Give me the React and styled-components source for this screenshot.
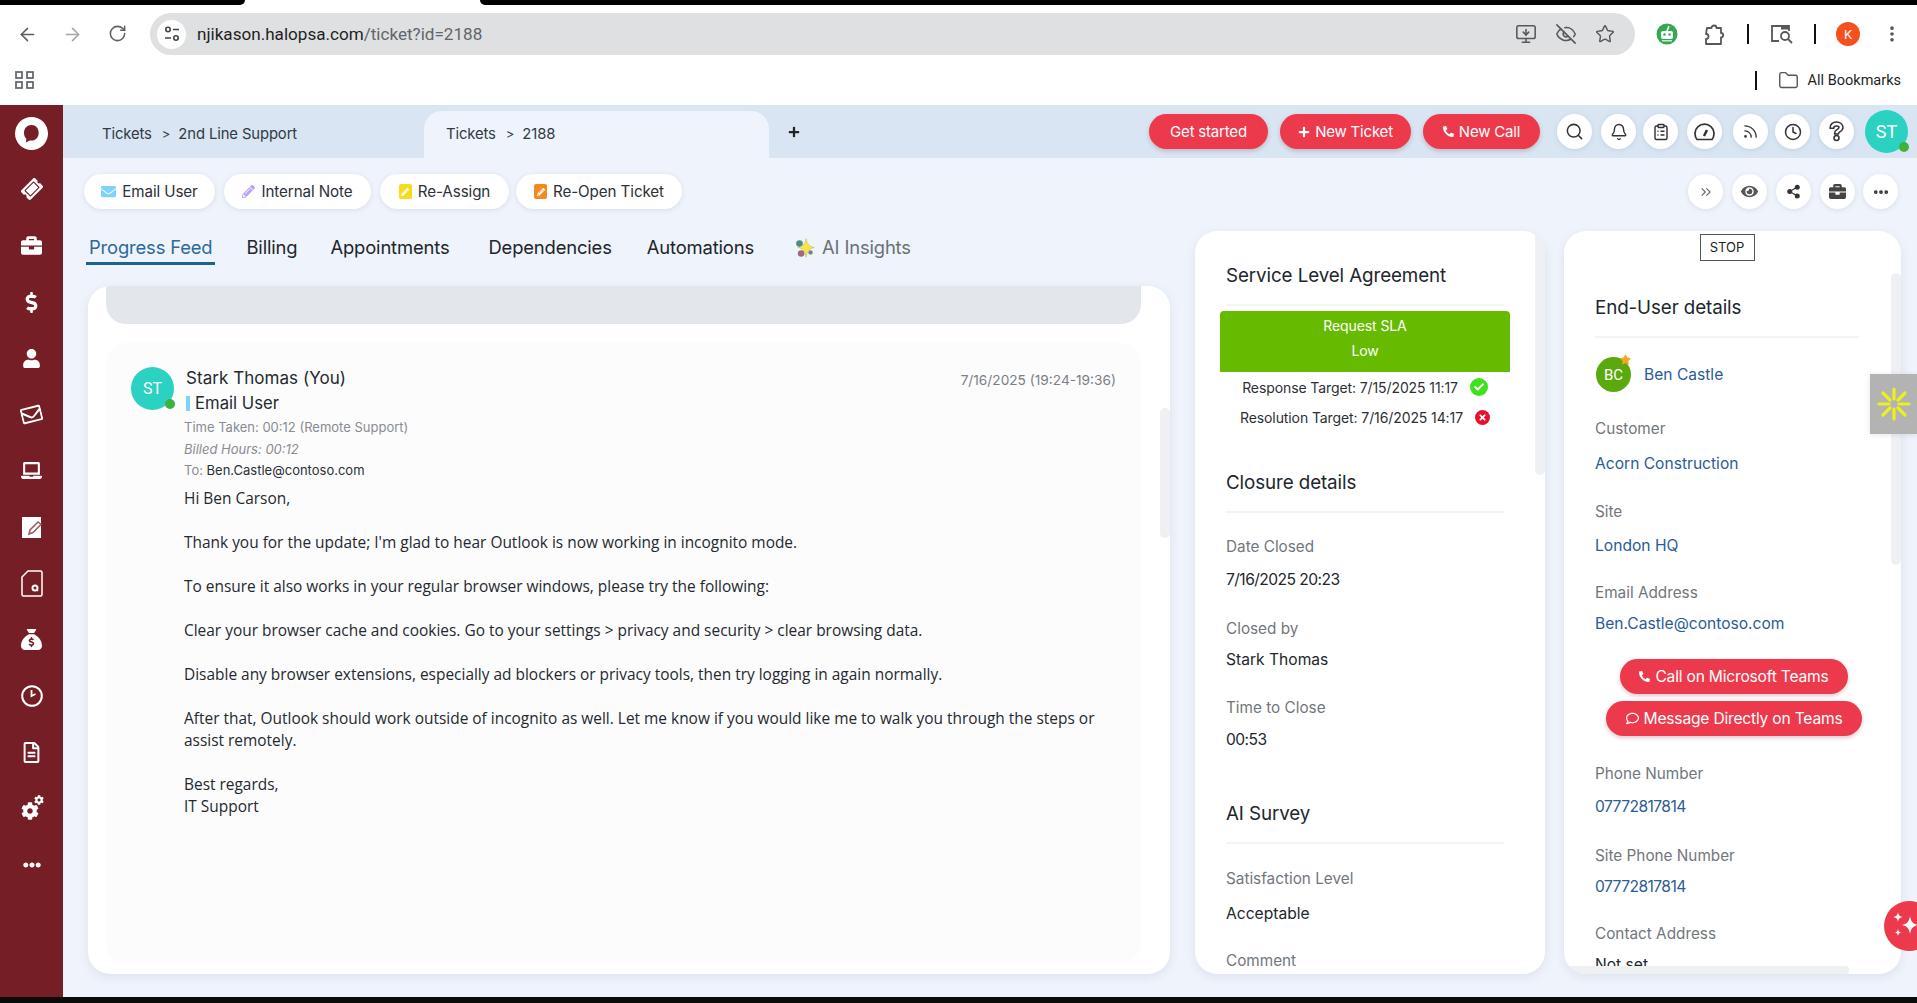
import React from "react";
import styled, { createGlobalStyle } from "styled-components";
import {
  ArrowLeft, ArrowRight, RotateCw, MonitorDown, EyeOff, Star, Folder, Search, Bell,
  ClipboardList, Rss, Clock, ChevronsRight, Share2, Ellipsis, EllipsisVertical,
} from "lucide-react";
import {
  FaTicketAlt, FaBriefcase, FaDollarSign, FaUser, FaRegEnvelope, FaLaptop, FaRegFileAlt,
  FaCog, FaEllipsisH, FaPlus, FaPhoneAlt, FaEnvelope, FaPencilAlt, FaEye, FaCheck, FaTimes, FaRegComment, FaStar,
} from "react-icons/fa";
import { FaSackDollar } from "react-icons/fa6";

const UI_FONT = '"Inter", "Liberation Sans", sans-serif';

const Global = createGlobalStyle`
  html, body { margin: 0; padding: 0; background: #000; overflow: hidden; }
  * { box-sizing: border-box; }
  body { font-family: ${UI_FONT}; }
`;

const Page = styled.div`
  position: relative;
  width: 1917px;
  height: 1003px;
  display: flex;
  flex-direction: column;
  overflow: hidden;
  background: #fff;
`;

const TopStrip = styled.div`
  height: 5px;
  display: flex;
  justify-content: space-between;
  background: #fff;
`;

const StripPiece = styled.div`
  width: ${({ $w }) => $w}px;
  background: #000;
  border-radius: ${({ $right }) => ($right ? "0 0 0 6px" : "0 0 6px 0")};
`;

const Toolbar = styled.div`
  height: 55px;
  padding: 8px 0 5px 0;
  display: flex;
  align-items: center;
  background: #fff;
`;

const NavIcon = styled.div`
  width: 45px;
  display: flex;
  justify-content: center;
  color: ${({ $dim }) => ($dim ? "#a5a7aa" : "#5b5e62")};
`;

const NavGroup = styled.div`
  width: 150px;
  padding-left: 5px;
  display: flex;
`;

const UrlBar = styled.div`
  width: 1485px;
  height: 42px;
  border-radius: 21px;
  background: #dfe0e2;
  display: flex;
  align-items: center;
  padding: 0 20px 0 7px;
`;

const SiteIcon = styled.div`
  width: 29px;
  height: 29px;
  border-radius: 50%;
  background: #fff;
  display: flex;
  align-items: center;
  justify-content: center;
  margin-right: 11px;
`;

const UrlText = styled.div`
  font: 400 17.1px "Roboto", sans-serif;
  color: #1f1f1f;
  span { color: #62656a; }
`;

const UrlActions = styled.div`
  margin-left: auto;
  display: flex;
  align-items: center;
  gap: 18px;
  color: #55585c;
`;

const ChromeRight = styled.div`
  flex: 1;
  display: flex;
  align-items: center;
  padding-left: 21px;
  color: #55585c;
`;

const Sep = styled.div`
  width: 2px;
  height: ${({ $h }) => $h || 20}px;
  background: #111;
  margin: ${({ $m }) => $m};
`;

const KAvatar = styled.div`
  width: 24px;
  height: 24px;
  border-radius: 50%;
  background: #f4511e;
  color: #fff;
  font: 400 13px "Roboto", sans-serif;
  display: flex;
  align-items: center;
  justify-content: center;
`;

const KebabSlot = styled.div`
  margin-left: 22px;
  display: flex;
`;

const BookmarkBar = styled.div`
  height: 45px;
  padding: 0 16px 5px 15px;
  display: flex;
  align-items: center;
  color: #555;
`;

const AllBookmarks = styled.div`
  font: 400 14.5px "Roboto", sans-serif;
  color: #1f1f1f;
  margin-left: 9px;
`;

const Workspace = styled.div`
  flex: 1;
  min-height: 0;
  display: flex;
`;

const BottomStrip = styled.div`
  height: 6px;
  background: #0b0b0b;
  flex-shrink: 0;
`;

const Sidebar = styled.nav`
  width: 63px;
  flex-shrink: 0;
  background: #751e25;
  display: flex;
  flex-direction: column;
  color: #fff;
`;

const SideItem = styled.div`
  position: relative;
  height: 56.3px;
  display: flex;
  align-items: center;
  justify-content: center;
  svg { transform: ${({ $rot }) => ($rot ? `rotate(${$rot}deg)` : "none")}; }
`;

const GearBox = styled.div`
  position: relative;
  width: 22px;
  height: 22px;
`;

const SmallGear = styled.span`
  position: absolute;
  top: -3px;
  right: -1px;
  display: flex;
`;

const BigGear = styled.span`
  position: absolute;
  left: 0;
  bottom: 0;
  display: flex;
`;

const Main = styled.main`
  flex: 1;
  min-width: 0;
  display: flex;
  flex-direction: column;
  background: #eff3fb;
`;

const Header = styled.header`
  height: 53px;
  flex-shrink: 0;
  background: #d9e5f2;
  display: flex;
  align-items: flex-end;
`;

const Crumb = styled.div`
  width: ${({ $w }) => $w}px;
  height: ${({ $active }) => ($active ? 47 : 53)}px;
  padding-left: ${({ $active }) => ($active ? 22 : 39)}px;
  padding-top: ${({ $active }) => ($active ? 0 : 4)}px;
  padding-bottom: ${({ $active }) => ($active ? 2 : 0)}px;
  background: ${({ $active }) => ($active ? "#eff3fb" : "transparent")};
  border-radius: ${({ $active }) => ($active ? "18px 18px 0 0" : "0")};
  display: flex;
  align-items: center;
  font-size: 14.8px;
  letter-spacing: -0.1px;
  color: #2f3a45;
`;

const CrumbArrow = styled.span`
  margin: ${({ $active }) => ($active ? "0 8px 0 10px" : "0 8px 0 10px")};
  font-size: 13px;
`;

const AddTab = styled.div`
  height: 53px;
  margin-left: 19px;
  display: flex;
  align-items: center;
  color: #222;
`;

const HeaderRight = styled.div`
  height: 53px;
  margin-left: auto;
  padding-right: 9px;
  display: flex;
  align-items: center;
`;

const RedButton = styled.div`
  width: ${({ $w }) => $w}px;
  height: 35px;
  margin: ${({ $m }) => $m || "0"};
  border-radius: 18px;
  background: #ec3a4c;
  box-shadow: 0 2px 4px rgba(120, 40, 50, 0.25);
  color: #fff;
  font-size: ${({ $f }) => $f || 15}px;
  letter-spacing: -0.2px;
  display: flex;
  align-items: center;
  justify-content: center;
  gap: 5px;
  flex-shrink: 0;
`;

const Round = styled.div`
  width: 35px;
  height: 35px;
  margin-left: ${({ $ml }) => $ml || 0}px;
  border-radius: 50%;
  background: #fff;
  box-shadow: 0 1px 5px rgba(90, 110, 140, 0.16);
  color: ${({ $c }) => $c || "#333"};
  display: flex;
  align-items: center;
  justify-content: center;
  flex-shrink: 0;
`;

const Avatar = styled.div`
  position: relative;
  width: ${({ $s }) => $s}px;
  height: ${({ $s }) => $s}px;
  margin-left: ${({ $ml }) => $ml || 0}px;
  border-radius: 50%;
  background: ${({ $bg }) => $bg || "#2bd1c1"};
  color: #fff;
  font: 400 ${({ $f }) => $f || 16}px "Roboto", sans-serif;
  display: flex;
  align-items: center;
  justify-content: center;
  flex-shrink: 0;
`;

const OnlineDot = styled.span`
  position: absolute;
  right: -1px;
  bottom: 1px;
  width: 10px;
  height: 10px;
  border-radius: 50%;
  background: #3fb23c;
`;

const FavStar = styled.span`
  position: absolute;
  top: -3px;
  right: 0;
  color: #f5a623;
  display: flex;
`;

const ActionRow = styled.div`
  height: 73px;
  flex-shrink: 0;
  padding: 16px 19px 0 21px;
  display: flex;
  align-items: flex-start;
`;

const Pill = styled.div`
  width: ${({ $w }) => $w}px;
  height: 35px;
  margin-right: ${({ $mr }) => $mr || 9}px;
  border-radius: 18px;
  background: #fff;
  box-shadow: 0 1px 5px rgba(90, 110, 140, 0.16);
  display: flex;
  align-items: center;
  justify-content: center;
  gap: 6px;
  font-size: 15.2px;
  letter-spacing: -0.1px;
  color: #2c3138;
`;

const Badge = styled.span`
  width: 13px;
  height: 15px;
  border-radius: 2px;
  background: ${({ $bg }) => $bg};
  color: #fff;
  display: flex;
  align-items: center;
  justify-content: center;
`;

const RowRight = styled.div`
  margin-left: auto;
  display: flex;
`;

const Content = styled.div`
  flex: 1;
  min-height: 0;
  padding: 0 0 23px 25px;
  display: grid;
  grid-template-columns: 1107px 369px 337px;
`;

const LeftColumn = styled.div`
  padding-right: 25px;
  display: flex;
  flex-direction: column;
  min-height: 0;
`;

const Tabs = styled.div`
  height: 34px;
  margin: 0 0 21px -2px;
  display: flex;
  flex-shrink: 0;
`;

const Tab = styled.div`
  height: 34px;
  margin-right: ${({ $mr }) => $mr}px;
  padding: 6px 3px 0;
  border-bottom: 3px solid ${({ $active }) => ($active ? "#1b6296" : "transparent")};
  font-size: 18.4px;
  line-height: 20px;
  letter-spacing: -0.15px;
  white-space: nowrap;
  color: ${({ $active, $muted }) => ($active ? "#2a6a9c" : $muted ? "#6b7075" : "#20262c")};
  display: flex;
  gap: 6px;
  align-items: flex-start;
`;

const Card = styled.section`
  position: relative;
  flex: 1;
  min-height: 0;
  background: #fff;
  border-radius: 22px;
  box-shadow: 0 3px 10px rgba(90, 110, 140, 0.12);
  overflow: hidden;
`;

const FeedCard = styled(Card)`
  padding: 0 29px 0 18px;
  display: flex;
  flex-direction: column;
`;

const Banner = styled.div`
  height: 38px;
  flex-shrink: 0;
  background: #e3e7ec;
  border-radius: 0 0 20px 20px;
`;

const FeedItem = styled.article`
  height: 620px;
  margin-top: 19px;
  padding: 24px 25px 0 25px;
  background: #fcfcfd;
  border-radius: 20px;
  display: grid;
  grid-template-columns: 43px 1fr;
  column-gap: 10px;
`;

const FeedHead = styled.div`
  position: relative;
  min-width: 0;
`;

const FeedName = styled.div`
  height: 22px;
  padding-left: 2px;
  font-size: 17px;
  line-height: 22px;
  color: #24292f;
  letter-spacing: 0.05px;
`;

const FeedDate = styled.div`
  position: absolute;
  top: 3px;
  right: 0;
  font-size: 13.7px;
  line-height: 20px;
  color: #7b7f85;
`;

const FeedType = styled.div`
  height: 24px;
  margin-top: 2px;
  padding-left: 2px;
  font-size: 16.7px;
  line-height: 24px;
  color: #24292f;
  display: flex;
  align-items: center;
  gap: 5px;
`;

const TypeMark = styled.span`
  width: 4px;
  height: 15px;
  background: #7fd3fb;
`;

const FeedMeta = styled.div`
  height: ${({ $h }) => $h || 22}px;
  margin-top: ${({ $mt }) => $mt || 0}px;
  font-size: 13px;
  line-height: ${({ $h }) => $h || 22}px;
  font-style: ${({ $italic }) => ($italic ? "italic" : "normal")};
  color: #888c91;
  b { font-weight: 400; color: #2b3036; }
`;

const FeedBody = styled.div`
  margin-top: 7px;
  font: 400 15.45px/22px "Open Sans", sans-serif;
  color: #24292f;
  p { margin: 0 0 22px; }
`;

const PanelScroll = styled.div`
  position: absolute;
  top: ${({ $top }) => $top}px;
  right: 0;
  width: 10px;
  height: ${({ $h }) => $h}px;
  border-radius: 6px;
  background: #eef0f4;
`;

const SidePanel = styled(Card)`
  width: ${({ $w }) => $w}px;
  padding: ${({ $pad }) => $pad};
  flex: none;
  height: 743px;
`;

const SectionTitle = styled.h3`
  margin: ${({ $mt }) => $mt || 0}px 0 0;
  height: 44px;
  padding: 1px 0 15px;
  border-bottom: 2px solid #f3f4f7;
  font-size: 18.8px;
  font-weight: 400;
  line-height: 26px;
  letter-spacing: -0.1px;
  color: #20262c;
`;

const SlaBox = styled.div`
  height: 61px;
  margin: 5px -6px 0;
  padding-top: 2px;
  background: #66bb00;
  border-radius: 4px 4px 0 0;
  color: #fff;
  font-size: 14px;
  line-height: 25px;
  text-align: center;
  letter-spacing: -0.1px;
`;

const Target = styled.div`
  height: 30px;
  display: flex;
  align-items: center;
  justify-content: center;
  gap: 12px;
  font-size: 14px;
  letter-spacing: -0.1px;
  white-space: nowrap;
  color: #2b3036;
`;

const StatusDot = styled.span`
  width: ${({ $s }) => $s}px;
  height: ${({ $s }) => $s}px;
  border-radius: 50%;
  background: ${({ $bg }) => $bg};
  color: #fff;
  display: flex;
  align-items: center;
  justify-content: center;
  flex-shrink: 0;
`;

const Label = styled.div`
  margin-top: ${({ $mt }) => $mt}px;
  font-size: 15.3px;
  line-height: 20px;
  color: #72767c;
`;

const Value = styled.div`
  margin-top: ${({ $mt }) => $mt}px;
  font-size: 15.6px;
  line-height: 20px;
  letter-spacing: ${({ $tight }) => ($tight ? "-0.55px" : "0")};
  color: ${({ $link }) => ($link ? "#2a5c96" : "#22272d")};
`;

const StopBox = styled.div`
  width: 55px;
  height: 27px;
  margin: 3px auto 0;
  border: 1px solid #555;
  font-size: 13px;
  line-height: 25px;
  text-align: center;
  color: #222;
`;

const EndUserRow = styled.div`
  height: 35px;
  margin-top: 19px;
  display: flex;
  align-items: center;
  gap: 13px;
  padding-left: 1px;
`;

const ButtonStack = styled.div`
  width: 264px;
  margin: 25px 0 0 7px;
  display: flex;
  flex-direction: column;
  align-items: center;
  gap: 7px;
`;

const HScroll = styled.div`
  position: absolute;
  left: 3px;
  bottom: 0;
  width: 282px;
  height: 8px;
  border-radius: 4px;
  background: #eef0f2;
`;

const SideTool = styled.div`
  position: absolute;
  top: 374px;
  right: 0;
  width: 47px;
  height: 60px;
  background: #b3b3b3;
  display: flex;
  align-items: center;
  justify-content: center;
  box-shadow: 0 1px 6px rgba(0, 0, 0, 0.1);
`;

const FloatButton = styled.div`
  position: absolute;
  top: 901px;
  left: 1884px;
  width: 50px;
  height: 50px;
  border-radius: 50%;
  background: #ec3a4c;
  display: flex;
  align-items: center;
  padding-left: 8px;
`;

const SiteTune = () => (
  <svg width="16" height="16" viewBox="0 0 16 16" fill="none" stroke="#444" strokeWidth="1.6">
    <circle cx="4" cy="3.5" r="2.2" />
    <path d="M9 3.5h6M1 12h6" />
    <circle cx="12" cy="12" r="2.2" />
  </svg>
);

const Bot = () => (
  <svg width="22" height="22" viewBox="0 0 22 22">
    <circle cx="11" cy="11" r="10.5" fill="#34a853" />
    <rect x="5" y="8" width="12" height="8" rx="2" fill="#fff" />
    <path d="M11 8l2-5" stroke="#fff" strokeWidth="1.5" />
    <circle cx="8.5" cy="11.5" r="1.2" fill="#34a853" />
    <circle cx="13.5" cy="11.5" r="1.2" fill="#34a853" />
    <rect x="6" y="17" width="10" height="1.5" fill="#cfe8d6" />
  </svg>
);

const ExtensionIcon = () => (
  <svg width="22" height="23" viewBox="0 0 22 23" fill="none" stroke="#55585c" strokeWidth="1.8" strokeLinejoin="round" style={{ marginLeft: 25 }}>
    <path d="M4 5h4.500a2.500 2.500 0 0 1 5 0H18v5a2.200 2.200 0 0 1 0 4.400V21H3v-5a2.500 2.500 0 0 0 0-5z" />
  </svg>
);

const TabSearch = () => (
  <svg width="24" height="22" viewBox="0 0 24 22" fill="none" stroke="#55585c" strokeWidth="1.8">
    <path d="M9 18H2V3h17v5" />
    <rect x="11" y="2.5" width="8" height="4" fill="#55585c" stroke="none" />
    <circle cx="15" cy="13" r="4" />
    <path d="M18 16l4 4" />
  </svg>
);

const AppsGrid = () => (
  <svg width="19" height="18" viewBox="0 0 19 18" fill="none" stroke="#5f6368" strokeWidth="1.7">
    <rect x="1" y="1" width="6" height="6" />
    <rect x="12" y="1" width="6" height="6" />
    <rect x="1" y="11" width="6" height="6" />
    <rect x="12" y="11" width="6" height="6" />
  </svg>
);

const HaloLogo = () => (
  <svg width="33" height="33" viewBox="0 0 33 33">
    <circle cx="16.5" cy="16.5" r="16.5" fill="#fff" />
    <path d="M16.500 8c4.300 0 7.200 3.300 7.200 7.800s-2.900 7.800-7.200 7.800c-.6 0-1.200-.1-1.800-.2L11 25.500l.3-3.700C9.700 20.300 9 18.200 9 15.800 9 11.300 12.200 8 16.500 8z" fill="#751e25" />
  </svg>
);

const EditSquare = () => (
  <svg width="20" height="21" viewBox="0 0 20 21">
    <rect width="19" height="21" fill="#fff" />
    <path d="M7 17l1-4 8-8 3 2.500-8 8z" fill="#fff" stroke="#9c5a60" strokeWidth="1.500" />
  </svg>
);

const DocSearch = () => (
  <svg width="22" height="27" viewBox="0 0 22 27" fill="none" stroke="#fff" strokeWidth="1.500">
    <path d="M7 1h12.500a1.500 1.500 0 0 1 1.500 1.500v22a1.500 1.500 0 0 1-1.500 1.500h-17A1.500 1.500 0 0 1 1 24.500V7z" />
    <circle cx="14" cy="18" r="2.500" strokeWidth="2" />
    <path d="M15.500 19.500l1.500 1.500" strokeWidth="1.500" />
  </svg>
);

const SideClock = () => (
  <svg width="22" height="22" viewBox="0 0 22 22" fill="none" stroke="#fff" strokeWidth="2">
    <circle cx="11" cy="11" r="9.800" />
    <path d="M10.500 5v6l4-2" strokeWidth="1.800" />
  </svg>
);

const HelpOutline = () => (
  <svg width="15" height="21" viewBox="0 0 15 21" fill="none" stroke="#333" strokeWidth="1.500" strokeLinejoin="round">
    <path d="M7.500 1C11 1 14 3.200 14 6.500c0 2.600-1.700 3.600-3.500 4.600-.8.500-1 .8-1 1.900H5.500c0-2.500.8-3.400 2.300-4.300 1.200-.7 2.200-1.200 2.200-2.200 0-1-1.200-1.500-2.500-1.500-1.500 0-2.700.8-2.700 2.200H1C1 3.200 3.800 1 7.500 1z" />
    <circle cx="7.500" cy="17" r="2.500" />
  </svg>
);

const GaugeOutline = () => (
  <svg width="21" height="19" viewBox="0 0 21 19" fill="none" stroke="#333" strokeWidth="1.700">
    <path d="M3 17.500A9.500 9.500 0 1 1 18 17.500z" strokeLinejoin="round" />
    <path d="M10 14l3-6" strokeWidth="2.500" />
  </svg>
);

const SlideSpark = () => (
  <svg width="36" height="36" viewBox="0 0 36 36" stroke="#eef01a" strokeWidth="3.200" strokeLinecap="round">
    <path d="M18 3v10M18 23v10M3 18h10M23 18h10M7 7l7 7M22 22l7 7M29 7l-7 7M14 22l-7 7" />
  </svg>
);

const AiStar = () => (
  <svg width="22" height="22" viewBox="0 0 20 20">
    <circle cx="5" cy="6" r="3" fill="#4f8a8b" />
    <circle cx="6.500" cy="15" r="3" fill="#9a6a80" />
    <circle cx="15" cy="14" r="2" fill="#7a7f85" />
    <path d="M11 1.500c.7 4.500 2.500 7 7.500 8-5 1-6.800 3.500-7.500 9-.7-5.500-2.500-8-7.500-9 5-1 6.800-3.500 7.500-8z" fill="#f7e64a" stroke="#c9b92e" strokeWidth=".5" />
  </svg>
);

const WhiteSparkles = () => (
  <svg width="26" height="34" viewBox="0 0 26 34" fill="#fff">
    <path d="M6 3c.5 3.300 1.500 4.500 5 5-3.500.5-4.500 1.700-5 5-.5-3.300-1.500-4.500-5-5 3.500-.5 4.500-1.700 5-5z" />
    <path d="M18 7c.8 5.500 3 8 8 9-5 1-7.200 3.500-8 9-.8-5.500-3-8-8-9 5-1 7.200-3.500 8-9z" />
    <path d="M6 20c.4 2.400 1.200 3.200 3.500 3.500C7.200 23.800 6.400 24.600 6 27c-.4-2.400-1.200-3.200-3.500-3.500C4.800 23.200 5.600 22.400 6 20z" />
  </svg>
);

const sideItems = [
  { key: "logo", icon: <HaloLogo /> },
  { key: "ticket", icon: <FaTicketAlt size={20} />, rot: -45 },
  { key: "work", icon: <FaBriefcase size={21} /> },
  { key: "money", icon: <FaDollarSign size={21} /> },
  { key: "user", icon: <FaUser size={19} /> },
  { key: "mail", icon: <FaRegEnvelope size={21} />, rot: -14 },
  { key: "laptop", icon: <FaLaptop size={21} /> },
  { key: "edit", icon: <EditSquare /> },
  { key: "doc", icon: <DocSearch /> },
  { key: "bag", icon: <FaSackDollar size={21} /> },
  { key: "clock", icon: <SideClock /> },
  { key: "file", icon: <FaRegFileAlt size={21} /> },
  {
    key: "gears",
    icon: (
      <GearBox>
        <BigGear><FaCog size={18} /></BigGear>
        <SmallGear><FaCog size={10} /></SmallGear>
      </GearBox>
    ),
  },
  { key: "more", icon: <FaEllipsisH size={18} /> },
];

const headIcons = [
  { key: "search", icon: <Search size={19} strokeWidth={1.9} />, ml: 17 },
  { key: "bell", icon: <Bell size={18} strokeWidth={1.9} />, ml: 9 },
  { key: "clip", icon: <ClipboardList size={18} strokeWidth={1.9} />, ml: 7 },
  { key: "gauge", icon: <GaugeOutline />, ml: 9 },
  { key: "rss", icon: <Rss size={17} strokeWidth={1.8} />, ml: 11 },
  { key: "clock", icon: <Clock size={18} strokeWidth={2} />, ml: 7 },
  { key: "help", icon: <HelpOutline />, ml: 9 },
];

const LeftPanelFields = () => (
  <SidePanel $w={350} $pad="31px 41px 0 31px">
    <PanelScroll $top={0} $h={244} />
    <SectionTitle>Service Level Agreement</SectionTitle>
    <SlaBox>
      Request SLA
      <br />
      Low
    </SlaBox>
    <Target>
      Response Target: 7/15/2025 11:17
      <StatusDot $s={18} $bg="#3fe01c"><FaCheck size={10} /></StatusDot>
    </Target>
    <Target>
      Resolution Target: 7/16/2025 14:17
      <StatusDot $s={15} $bg="#e8112d"><FaTimes size={9} /></StatusDot>
    </Target>
    <SectionTitle $mt={37}>Closure details</SectionTitle>
    <Label $mt={24}>Date Closed</Label>
    <Value $mt={13} $tight>7/16/2025 20:23</Value>
    <Label $mt={29}>Closed by</Label>
    <Value $mt={11}>Stark Thomas</Value>
    <Label $mt={28}>Time to Close</Label>
    <Value $mt={12} $tight>00:53</Value>
    <SectionTitle $mt={50}>AI Survey</SectionTitle>
    <Label $mt={25}>Satisfaction Level</Label>
    <Value $mt={15}>Acceptable</Value>
    <Label $mt={27}>Comment</Label>
  </SidePanel>
);

const RightPanelFields = () => (
  <SidePanel $w={337} $pad="0 42px 0 31px">
    <PanelScroll $top={42} $h={292} />
    <StopBox>STOP</StopBox>
    <SectionTitle $mt={33}>End-User details</SectionTitle>
    <EndUserRow>
      <Avatar $s={35} $bg="#5aaa0e" $f={15}>
        BC
        <FavStar><FaStar size={11} /></FavStar>
      </Avatar>
      <Value $link>Ben Castle</Value>
    </EndUserRow>
    <Label $mt={27}>Customer</Label>
    <Value $mt={15} $link>Acorn Construction</Value>
    <Label $mt={28}>Site</Label>
    <Value $mt={14} $link>London HQ</Value>
    <Label $mt={27}>Email Address</Label>
    <Value $mt={11} $link>Ben.Castle@contoso.com</Value>
    <ButtonStack>
      <RedButton $w={228} $f={15.6}><FaPhoneAlt size={11} /> Call on Microsoft Teams</RedButton>
      <RedButton $w={256} $f={15.6}><FaRegComment size={13} /> Message Directly on Teams</RedButton>
    </ButtonStack>
    <Label $mt={28}>Phone Number</Label>
    <Value $mt={13} $link $tight>07772817814</Value>
    <Label $mt={29}>Site Phone Number</Label>
    <Value $mt={11} $link $tight>07772817814</Value>
    <Label $mt={27}>Contact Address</Label>
    <Value $mt={11}>Not set</Value>
    <HScroll />
  </SidePanel>
);

export default function App() {
  return (
    <Page>
      <Global />
      <TopStrip>
        <StripPiece $w={245} />
        <StripPiece $w={1437} $right />
      </TopStrip>
      <Toolbar>
        <NavGroup>
          <NavIcon><ArrowLeft size={21} strokeWidth={1.8} /></NavIcon>
          <NavIcon $dim><ArrowRight size={21} strokeWidth={1.8} /></NavIcon>
          <NavIcon><RotateCw size={19} strokeWidth={1.9} /></NavIcon>
        </NavGroup>
        <UrlBar>
          <SiteIcon><SiteTune /></SiteIcon>
          <UrlText>njikason.halopsa.com<span>/ticket?id=2188</span></UrlText>
          <UrlActions>
            <MonitorDown size={22} strokeWidth={1.7} />
            <EyeOff size={22} strokeWidth={1.7} />
            <Star size={20} strokeWidth={1.7} />
          </UrlActions>
        </UrlBar>
        <ChromeRight>
          <Bot />
          <ExtensionIcon />
          <Sep $m="0 21px 0 22px" />
          <TabSearch />
          <Sep $m="0 20px 0 20px" />
          <KAvatar>K</KAvatar>
          <KebabSlot><EllipsisVertical size={20} strokeWidth={2.4} /></KebabSlot>
        </ChromeRight>
      </Toolbar>
      <BookmarkBar>
        <AppsGrid />
        <Sep $h={19} $m="0 21px 0 auto" />
        <Folder size={21} strokeWidth={1.6} />
        <AllBookmarks>All Bookmarks</AllBookmarks>
      </BookmarkBar>
      <Workspace>
        <Sidebar>
          {sideItems.map((item) => (
            <SideItem key={item.key} $rot={item.rot}>{item.icon}</SideItem>
          ))}
        </Sidebar>
        <Main>
          <Header>
            <Crumb $w={361}>Tickets<CrumbArrow>&gt;</CrumbArrow>2nd Line Support</Crumb>
            <Crumb $w={345} $active>Tickets<CrumbArrow $active>&gt;</CrumbArrow>2188</Crumb>
            <AddTab><FaPlus size={12} /></AddTab>
            <HeaderRight>
              <RedButton $w={119}>Get started</RedButton>
              <RedButton $w={131} $m="0 0 0 12px"><FaPlus size={12} /> New Ticket</RedButton>
              <RedButton $w={117} $m="0 0 0 12px"><FaPhoneAlt size={11} /> New Call</RedButton>
              {headIcons.map((item) => (
                <Round key={item.key} $ml={item.ml}>{item.icon}</Round>
              ))}
              <Avatar $s={43} $ml={11} $f={18}>
                ST
                <OnlineDot />
              </Avatar>
            </HeaderRight>
          </Header>
          <ActionRow>
            <Pill $w={131}><FaEnvelope size={15} color="#7fd3fb" /> Email User</Pill>
            <Pill $w={147}><FaPencilAlt size={13} color="#b9a3f0" /> Internal Note</Pill>
            <Pill $w={129} $mr={7}><Badge $bg="#f7dc1e"><FaPencilAlt size={8} /></Badge> Re-Assign</Pill>
            <Pill $w={166}><Badge $bg="#f28a1e"><FaPencilAlt size={8} /></Badge> Re-Open Ticket</Pill>
            <RowRight>
              <Round $c="#666"><ChevronsRight size={16} strokeWidth={1.6} /></Round>
              <Round $ml={9} $c="#555"><FaEye size={17} /></Round>
              <Round $ml={9}><Share2 size={15} fill="#333" strokeWidth={2} /></Round>
              <Round $ml={9} $c="#444"><FaBriefcase size={17} /></Round>
              <Round $ml={8}><Ellipsis size={18} strokeWidth={3} /></Round>
            </RowRight>
          </ActionRow>
          <Content>
            <LeftColumn>
              <Tabs>
                <Tab $active $mr={28}>Progress Feed</Tab>
                <Tab $mr={27}>Billing</Tab>
                <Tab $mr={33}>Appointments</Tab>
                <Tab $mr={29}>Dependencies</Tab>
                <Tab $mr={34}>Automations</Tab>
                <Tab $muted $mr={0}><AiStar />AI Insights</Tab>
              </Tabs>
              <FeedCard>
                <PanelScroll $top={122} $h={130} />
                <Banner />
                <FeedItem>
                  <Avatar $s={43} $f={16}>
                    ST
                    <OnlineDot />
                  </Avatar>
                  <FeedHead>
                    <FeedDate>7/16/2025 (19:24-19:36)</FeedDate>
                    <FeedName>Stark Thomas (You)</FeedName>
                    <FeedType><TypeMark />Email User</FeedType>
                    <FeedMeta $mt={1}>Time Taken: 00:12 (Remote Support)</FeedMeta>
                    <FeedMeta $italic>Billed Hours: 00:12</FeedMeta>
                    <FeedMeta $h={20}>To: <b>Ben.Castle@contoso.com</b></FeedMeta>
                    <FeedBody>
                      <p>Hi Ben Carson,</p>
                      <p>Thank you for the update; I'm glad to hear Outlook is now working in incognito mode.</p>
                      <p>To ensure it also works in your regular browser windows, please try the following:</p>
                      <p>Clear your browser cache and cookies. Go to your settings &gt; privacy and security &gt; clear browsing data.</p>
                      <p>Disable any browser extensions, especially ad blockers or privacy tools, then try logging in again normally.</p>
                      <p>After that, Outlook should work outside of incognito as well. Let me know if you would like me to walk you through the steps or assist remotely.</p>
                      <p>Best regards,<br />IT Support</p>
                    </FeedBody>
                  </FeedHead>
                </FeedItem>
              </FeedCard>
            </LeftColumn>
            <LeftPanelFields />
            <RightPanelFields />
          </Content>
        </Main>
      </Workspace>
      <BottomStrip />
      <SideTool><SlideSpark /></SideTool>
      <FloatButton><WhiteSparkles /></FloatButton>
    </Page>
  );
}
